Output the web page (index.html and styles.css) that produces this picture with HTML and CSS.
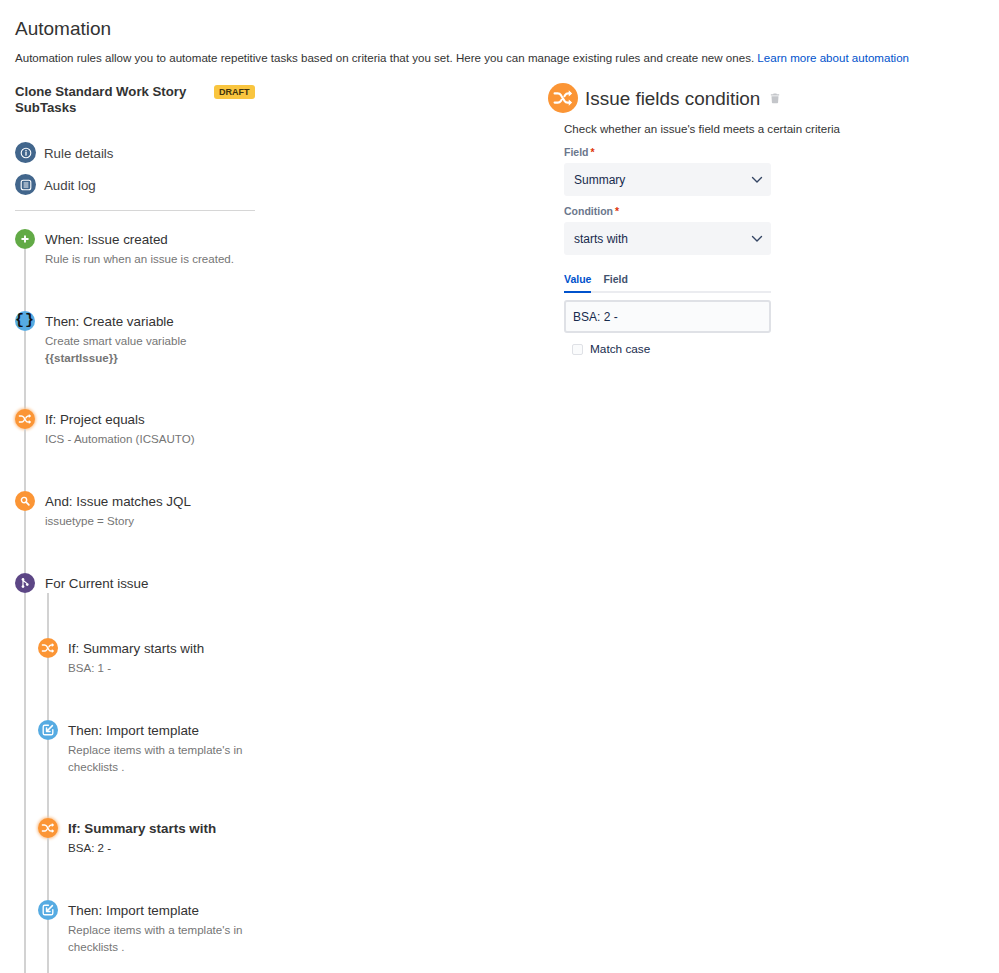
FILE: index.html
```html
<!DOCTYPE html>
<html lang="en">
<head>
<meta charset="utf-8">
<title>Automation</title>
<link rel="stylesheet" href="styles.css">
</head>
<body>
<svg class="defs" width="0" height="0" aria-hidden="true">
  <symbol id="shuffle" viewBox="0 0 20 20">
    <path d="M3 6.200h2.600c1.200 0 2 .5 2.700 1.500l2.900 4.600c.7 1 1.500 1.500 2.700 1.500H16M3 13.800h2.600c1.200 0 2-.5 2.700-1.500l.5-.8M11.200 8.500l.5-.8c.7-1 1.500-1.500 2.700-1.500H16" fill="none" stroke="currentColor" stroke-width="1.800" stroke-linecap="round"/>
    <path d="M14.800 3.600 17.600 6.200 14.800 8.800zM14.800 11.200 17.600 13.800 14.800 16.400z" fill="currentColor"/>
  </symbol>
  <symbol id="import" viewBox="0 0 20 20">
    <path d="M10.500 4H6a2 2 0 0 0-2 2v8a2 2 0 0 0 2 2h8a2 2 0 0 0 2-2V9.500" fill="none" stroke="currentColor" stroke-width="1.700" stroke-linecap="round"/>
    <path d="M15.500 4.500 8.500 11.500M8.200 7.500v4.300h4.300" fill="none" stroke="currentColor" stroke-width="1.900" stroke-linecap="round" stroke-linejoin="round"/>
  </symbol>
</svg>

<header class="page-head">
  <h1 class="page-title">Automation</h1>
  <p class="page-desc">Automation rules allow you to automate repetitive tasks based on criteria that you set. Here you can manage existing rules and create new ones. <a class="link" href="#">Learn more about automation</a></p>
</header>

<main class="layout">
  <section class="rule">
    <div class="rule-head">
      <h2 class="rule-name">Clone Standard Work Story SubTasks</h2>
      <span class="lozenge">DRAFT</span>
    </div>

    <nav class="rule-nav">
      <div class="nav-item">
        <span class="dot dot-slate">
          <svg viewBox="0 0 20 20" class="ico"><circle cx="10" cy="10" r="6" fill="none" stroke="currentColor" stroke-width="1.400"/><path d="M10 9.300v3.400" stroke="currentColor" stroke-width="1.600" stroke-linecap="round"/><circle cx="10" cy="7.200" r="1" fill="currentColor"/></svg>
        </span>
        <span class="nav-text">Rule details</span>
      </div>
      <div class="nav-item">
        <span class="dot dot-slate">
          <svg viewBox="0 0 20 20" class="ico"><rect x="4" y="4" width="12" height="12" rx="2.500" fill="none" stroke="currentColor" stroke-width="1.400"/><path d="M7 7.500h6M7 10h6M7 12.500h6" stroke="currentColor" stroke-width="1.200"/></svg>
        </span>
        <span class="nav-text">Audit log</span>
      </div>
    </nav>

    <div class="flow">
      <div class="step">
        <div class="rail">
          <span class="dot dot-green"><svg viewBox="0 0 20 20" class="ico"><path d="M10 6.500v7M6.500 10h7" stroke="currentColor" stroke-width="2.400" stroke-linecap="round"/></svg></span>
          <span class="line"></span>
        </div>
        <div class="step-body">
          <div class="step-title">When: Issue created</div>
          <div class="step-desc">Rule is run when an issue is created.</div>
        </div>
      </div>

      <div class="step step-tall">
        <div class="rail">
          <span class="dot dot-blue dot-braces">{}</span>
          <span class="line"></span>
        </div>
        <div class="step-body">
          <div class="step-title">Then: Create variable</div>
          <div class="step-desc">Create smart value variable<br><strong>{{startIssue}}</strong></div>
        </div>
      </div>

      <div class="step">
        <div class="rail">
          <span class="dot dot-orange dot-glow"><svg class="ico"><use href="#shuffle"/></svg></span>
          <span class="line"></span>
        </div>
        <div class="step-body">
          <div class="step-title">If: Project equals</div>
          <div class="step-desc">ICS - Automation (ICSAUTO)</div>
        </div>
      </div>

      <div class="step">
        <div class="rail">
          <span class="dot dot-orange"><svg viewBox="0 0 20 20" class="ico"><circle cx="8.800" cy="8.800" r="3.300" fill="none" stroke="currentColor" stroke-width="1.800"/><path d="m11.500 11.500 3.300 3.300" stroke="currentColor" stroke-width="2.200" stroke-linecap="round"/></svg></span>
          <span class="line"></span>
        </div>
        <div class="step-body">
          <div class="step-title">And: Issue matches JQL</div>
          <div class="step-desc">issuetype = Story</div>
        </div>
      </div>

      <div class="group">
        <div class="rail rail-group">
          <span class="dot dot-purple"><svg viewBox="0 0 20 20" class="ico"><path d="M7.500 5.500v9M7.800 6c0 3 5 2.500 5 6" fill="none" stroke="currentColor" stroke-width="1.500"/><circle cx="7.500" cy="5.500" r="1.700" fill="currentColor"/><circle cx="7.500" cy="14.500" r="1.700" fill="currentColor"/><circle cx="12.800" cy="12" r="1.700" fill="currentColor"/></svg></span>
          <span class="line"></span>
        </div>
        <div class="group-body">
          <div class="group-title">For Current issue</div>
          <div class="nested">
            <div class="step">
              <div class="rail rail-nested">
                <span class="line line-lead"></span>
                <span class="dot dot-orange"><svg class="ico"><use href="#shuffle"/></svg></span>
                <span class="line"></span>
              </div>
              <div class="step-body step-body-lead">
                <div class="step-title">If: Summary starts with</div>
                <div class="step-desc">BSA: 1 -</div>
              </div>
            </div>

            <div class="step step-tall">
              <div class="rail">
                <span class="dot dot-blue"><svg class="ico"><use href="#import"/></svg></span>
                <span class="line"></span>
              </div>
              <div class="step-body">
                <div class="step-title">Then: Import template</div>
                <div class="step-desc">Replace items with a template's in<br>checklists .</div>
              </div>
            </div>

            <div class="step">
              <div class="rail">
                <span class="dot dot-orange dot-glow"><svg class="ico"><use href="#shuffle"/></svg></span>
                <span class="line"></span>
              </div>
              <div class="step-body">
                <div class="step-title step-title-active">If: Summary starts with</div>
                <div class="step-desc step-desc-active">BSA: 2 -</div>
              </div>
            </div>

            <div class="step step-tall">
              <div class="rail">
                <span class="dot dot-blue"><svg class="ico"><use href="#import"/></svg></span>
                <span class="line"></span>
              </div>
              <div class="step-body">
                <div class="step-title">Then: Import template</div>
                <div class="step-desc">Replace items with a template's in<br>checklists .</div>
              </div>
            </div>
          </div>
        </div>
      </div>
    </div>
  </section>

  <section class="config">
    <div class="config-head">
      <span class="dot dot-orange dot-large"><svg class="ico"><use href="#shuffle"/></svg></span>
      <h2 class="config-title">Issue fields condition</h2>
      <svg class="trash" viewBox="0 0 12 14"><path d="M4.300 1.500h3.400l.5 1H11v1.500H1V2.500h2.800zM1.800 5h8.400l-.5 7.500a1 1 0 0 1-1 .9H3.300a1 1 0 0 1-1-.9z" fill="currentColor"/></svg>
    </div>
    <div class="config-body">
      <p class="config-desc">Check whether an issue's field meets a certain criteria</p>

      <div class="label">Field<span class="req">*</span></div>
      <div class="select">
        <span>Summary</span>
        <svg class="chev" viewBox="0 0 12 8"><path d="m1.500 1.500 4.500 4.500 4.500-4.500" fill="none" stroke="currentColor" stroke-width="1.400" stroke-linecap="round" stroke-linejoin="round"/></svg>
      </div>

      <div class="label">Condition<span class="req">*</span></div>
      <div class="select">
        <span>starts with</span>
        <svg class="chev" viewBox="0 0 12 8"><path d="m1.500 1.500 4.500 4.500 4.500-4.500" fill="none" stroke="currentColor" stroke-width="1.400" stroke-linecap="round" stroke-linejoin="round"/></svg>
      </div>

      <div class="tabs">
        <span class="tab tab-active">Value</span>
        <span class="tab">Field</span>
      </div>
      <div class="input">BSA: 2 -</div>
      <label class="check"><span class="box"></span><span>Match case</span></label>
    </div>
  </section>
</main>
</body>
</html>
```

FILE: styles.css
```css
* { box-sizing: border-box; }
html, body { margin: 0; height: 973px; overflow: hidden; background: #fff; }
body {
  font-family: "Liberation Sans", Arial, sans-serif;
  color: #333;
  padding: 0 15px;
}
.defs { display: block; height: 0; }

.page-head { padding-top: 18px; }
.page-title { margin: 0; font-size: 19px; line-height: 22px; font-weight: 400; color: #333; }
.page-desc { margin: 10px 0 0; font-size: 11.570px; line-height: 16px; color: #333; white-space: nowrap; }
.link { color: #0052cc; text-decoration: none; }

.layout { display: flex; margin-top: 17px; }
.rule { width: 240px; flex: none; }
.config { margin-left: 293px; }

.rule-head { display: flex; justify-content: space-between; align-items: flex-start; }
.rule-name { margin: 0; padding-top: 1px; width: 185px; font-size: 13.200px; line-height: 16px; font-weight: 700; color: #333; }
.lozenge {
  margin-top: 2px;
  background: #f9c53f;
  color: #42320c;
  border-radius: 3px;
  font-size: 9px;
  font-weight: 700;
  line-height: 14px;
  padding: 0 5.500px;
}

.rule-nav { margin-top: 26px; padding-bottom: 15px; border-bottom: 1px solid #d6d6d6; display: flex; flex-direction: column; gap: 11px; }
.nav-item { display: flex; align-items: center; gap: 8px; font-size: 13.300px; line-height: 20px; color: #444; }
.nav-text { padding-top: 2px; line-height: 18px; }

.dot {
  width: 20px; height: 20px; flex: none; border-radius: 50%;
  display: flex; align-items: center; justify-content: center;
  color: #fff;
}
.ico { width: 16px; height: 16px; display: block; }
.dot-slate { background: #42668c; width: 21px; height: 21px; }
.dot-green { background: #62aa46; }
.dot-blue { background: #56abe2; }
.dot-orange { background: #fb9535; }
.dot-purple { background: #5c4685; }
.dot-glow { box-shadow: 0 0 3px 1px #fbc695; }
.dot-braces { color: #111; font-family: "Liberation Mono", monospace; font-size: 15px; font-weight: 700; line-height: 20px; letter-spacing: 1px; }
.dot-large { width: 30px; height: 30px; }
.dot-large .ico { width: 24px; height: 24px; }

.flow { padding-top: 18px; }
.step { display: flex; gap: 10px; height: 82px; }
.step-tall { height: 98px; }
.rail { display: flex; flex-direction: column; align-items: center; width: 20px; flex: none; }
.line { width: 2px; flex: 1; background: #d2d2d2; }
.line-lead { flex: none; height: 45px; }

.step-body { padding-top: 1px; }
.step-title { font-size: 13.400px; line-height: 20px; color: #333; }
.step-title-active { font-weight: 700; }
.step-desc { margin-top: 1px; font-size: 11.570px; line-height: 16.500px; color: #757575; }
.step-desc strong { font-weight: 700; }
.step-desc-active { color: #333; }

.group { display: flex; }
.rail-group { width: 20px; }
.group-body { margin-left: 3px; }
.group-title { font-size: 13.400px; line-height: 20px; margin-left: 7px; height: 20px; padding-top: 1px; }
.nested { display: block; }
.nested > .step:first-child { height: 127px; }
.step-body-lead { padding-top: 46px; }

.config-head { display: flex; align-items: center; gap: 7px; height: 30px; }
.config-title { margin: 0; padding-top: 2px; font-size: 18.900px; line-height: 30px; font-weight: 400; color: #333; }
.trash { width: 10px; height: 12px; color: #c4c6ca; margin-left: 3px; }
.config-body { padding-left: 16px; width: 223px; }
.config-desc { margin: 8px 0 0; font-size: 11.570px; line-height: 16px; color: #333; white-space: nowrap; }
.label { margin-top: 7px; font-size: 10.500px; line-height: 16px; font-weight: 700; color: #6b778c; }
.req { color: #de350b; margin-left: 2px; }
.select {
  margin-top: 3px; height: 33px; border-radius: 3px; background: #f4f5f7;
  display: flex; align-items: center; justify-content: space-between;
  padding: 0 8px 0 10px; font-size: 12px; color: #172b4d;
}
.chev { width: 12px; height: 8px; color: #344563; }

.tabs { margin-top: 16px; display: flex; gap: 12px; border-bottom: 2px solid #ebecf0; }
.tab { font-size: 10.500px; line-height: 16px; font-weight: 700; color: #42526e; padding-bottom: 4px; margin-bottom: -2px; border-bottom: 2px solid transparent; }
.tab-active { color: #0052cc; border-bottom-color: #0052cc; }
.input {
  margin-top: 7px; height: 33px; border: 2px solid #dfe1e6; border-radius: 3px; background: #fafbfc;
  display: flex; align-items: center; padding: 0 7px; font-size: 12px; color: #172b4d;
}
.check { display: flex; align-items: center; gap: 7px; margin-top: 8px; padding-left: 8px; font-size: 11.800px; line-height: 16px; color: #172b4d; }
.box { width: 11px; height: 11px; border: 1.500px solid #dfe1e6; border-radius: 2px; background: #fafbfc; }
```
